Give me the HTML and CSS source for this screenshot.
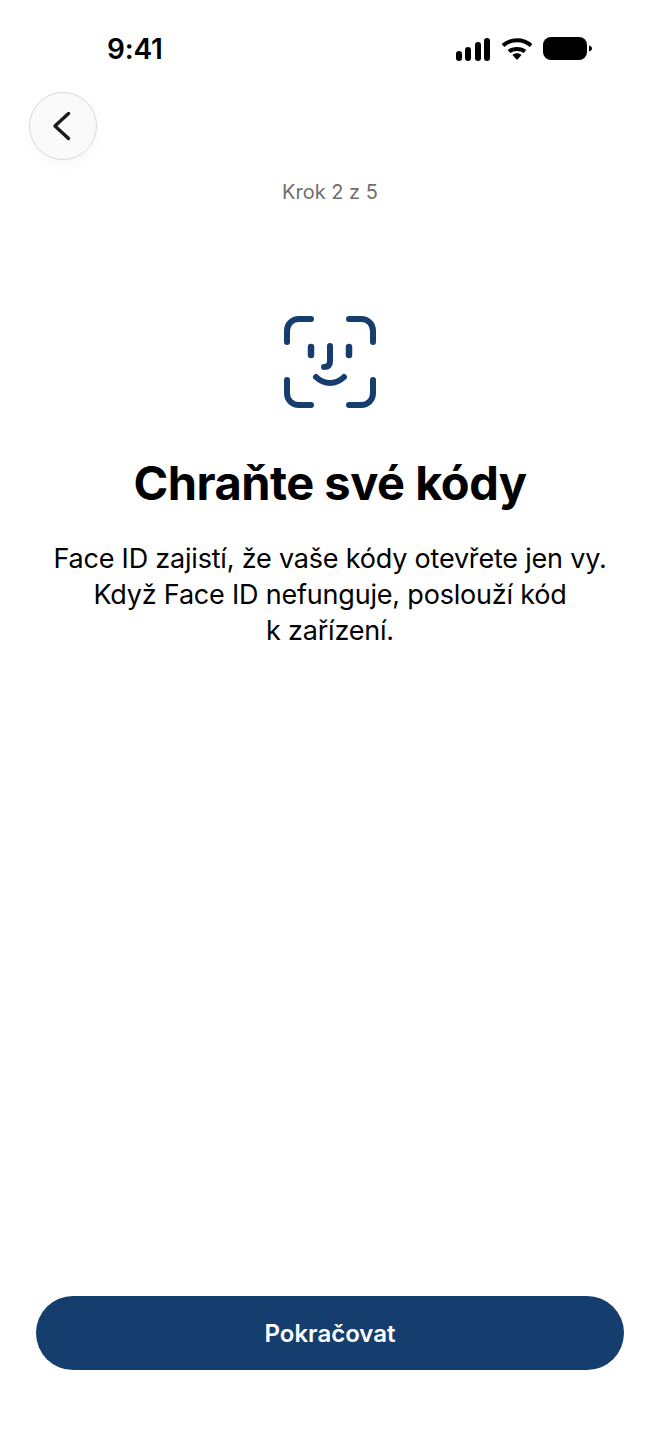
FILE: index.html
```html
<!DOCTYPE html>
<html lang="cs">
<head>
<meta charset="utf-8">
<title>Chraňte své kódy</title>
<link rel="stylesheet" href="styles.css">
</head>
<body>
<main class="screen">
  <header class="status">
    <span class="time">9:41</span>
    <span class="status-icons">
      <svg class="signal" width="36" height="24" viewBox="0 0 36 24" fill="#000">
        <rect x="1" y="14" width="6" height="10" rx="3"/>
        <rect x="10" y="10" width="6" height="14" rx="3"/>
        <rect x="20" y="5" width="6" height="19" rx="3"/>
        <rect x="29" y="1" width="6" height="23" rx="3"/>
      </svg>
      <svg class="wifi" width="32" height="24" viewBox="0 0 32 24" fill="none" stroke="#000" stroke-width="4">
        <path d="M2 8.500C9.500 1.500 22.500 1.500 30 8.500"/>
        <path d="M8 14.500C12 11 20 11 24 14.500"/>
        <path d="M11.500 18L16 23L20.500 18C18 15.800 14 15.800 11.500 18Z" fill="#000" stroke="none"/>
      </svg>
      <svg class="battery" width="49" height="24" viewBox="0 0 49 24" fill="#000">
        <rect x="0" y="0" width="44" height="23" rx="8"/>
        <path d="M46 8.500C48 9 49 10.200 49 11.500C49 12.800 48 14 46 14.500Z"/>
      </svg>
    </span>
  </header>
  <button class="back" type="button" aria-label="Zpět">
    <svg width="20" height="30" viewBox="0 0 20 30" fill="none" stroke="#1a1a1a" stroke-width="3.400" stroke-linecap="round" stroke-linejoin="round">
      <path d="M16.500 2.500L3 15L16.500 27.500"/>
    </svg>
  </button>
  <p class="step">Krok 2 z 5</p>
  <svg class="face" width="94" height="94" viewBox="0 0 94 94" fill="none" stroke="#153e6e" stroke-width="6" stroke-linecap="round" stroke-linejoin="round">
    <path d="M4 27V16C4 9 9 4 16 4H28"/>
    <path d="M66 4H78C85 4 90 9 90 16V27"/>
    <path d="M4 65V78C4 85 9 90 16 90H28"/>
    <path d="M66 90H78C85 90 90 85 90 78V65"/>
    <path d="M28 32V40" stroke-width="6.500"/>
    <path d="M66 32V40" stroke-width="6.500"/>
    <path d="M47 31V46C47 50 45 52 41 52"/>
    <path d="M33 62C41 70 53 70 61 62"/>
  </svg>
  <h1 class="title">Chraňte své kódy</h1>
  <p class="lead">Face ID zajistí, že vaše kódy otevřete jen vy.<br>Když Face ID nefunguje, poslouží kód<br>k zařízení.</p>
  <button class="primary" type="button">Pokračovat</button>
</main>
</body>
</html>
```
FILE: styles.css
```css
* { box-sizing: border-box; }
html, body { margin: 0; padding: 0; background: #fff; }
body { font-family: Inter, "Liberation Sans", sans-serif; color: #000; }
.screen { width: 660px; height: 1434px; display: flex; flex-direction: column; align-items: center; overflow: hidden; }
.status { width: 100%; height: 92px; padding: 32px 68px 0 107px; display: flex; justify-content: space-between; align-items: flex-start; }
.time { font-size: 28px; line-height: 34px; font-weight: 600; letter-spacing: -0.2px; }
.status-icons { display: flex; align-items: center; gap: 10px; height: 34px; }
.status-icons svg { display: block; }
.back { align-self: flex-start; margin-left: 29px; width: 68px; height: 68px; padding: 0 3px 0 0; border: 1px solid #d9d9d9; border-radius: 50%; background: #fafafa; box-shadow: 0 6px 14px rgba(0,0,0,.03); display: flex; align-items: center; justify-content: center; }
.step { margin: 20px 0 0; font-size: 20px; line-height: 24px; color: #6f6f6f; }
.face { margin-top: 111px; display: block; }
.title { margin: 44px 0 0; font-size: 47px; line-height: 60px; font-weight: 700; letter-spacing: -0.5px; white-space: nowrap; }
.lead { margin: 28px 0 0; font-size: 27px; line-height: 36px; text-align: center; letter-spacing: -0.2px; white-space: nowrap; }
.primary { margin-top: auto; margin-bottom: 64px; width: 588px; height: 74px; border: 0; border-radius: 37px; background: #153e6e; color: #fff; font: 600 24px Inter, "Liberation Sans", sans-serif; }
```
